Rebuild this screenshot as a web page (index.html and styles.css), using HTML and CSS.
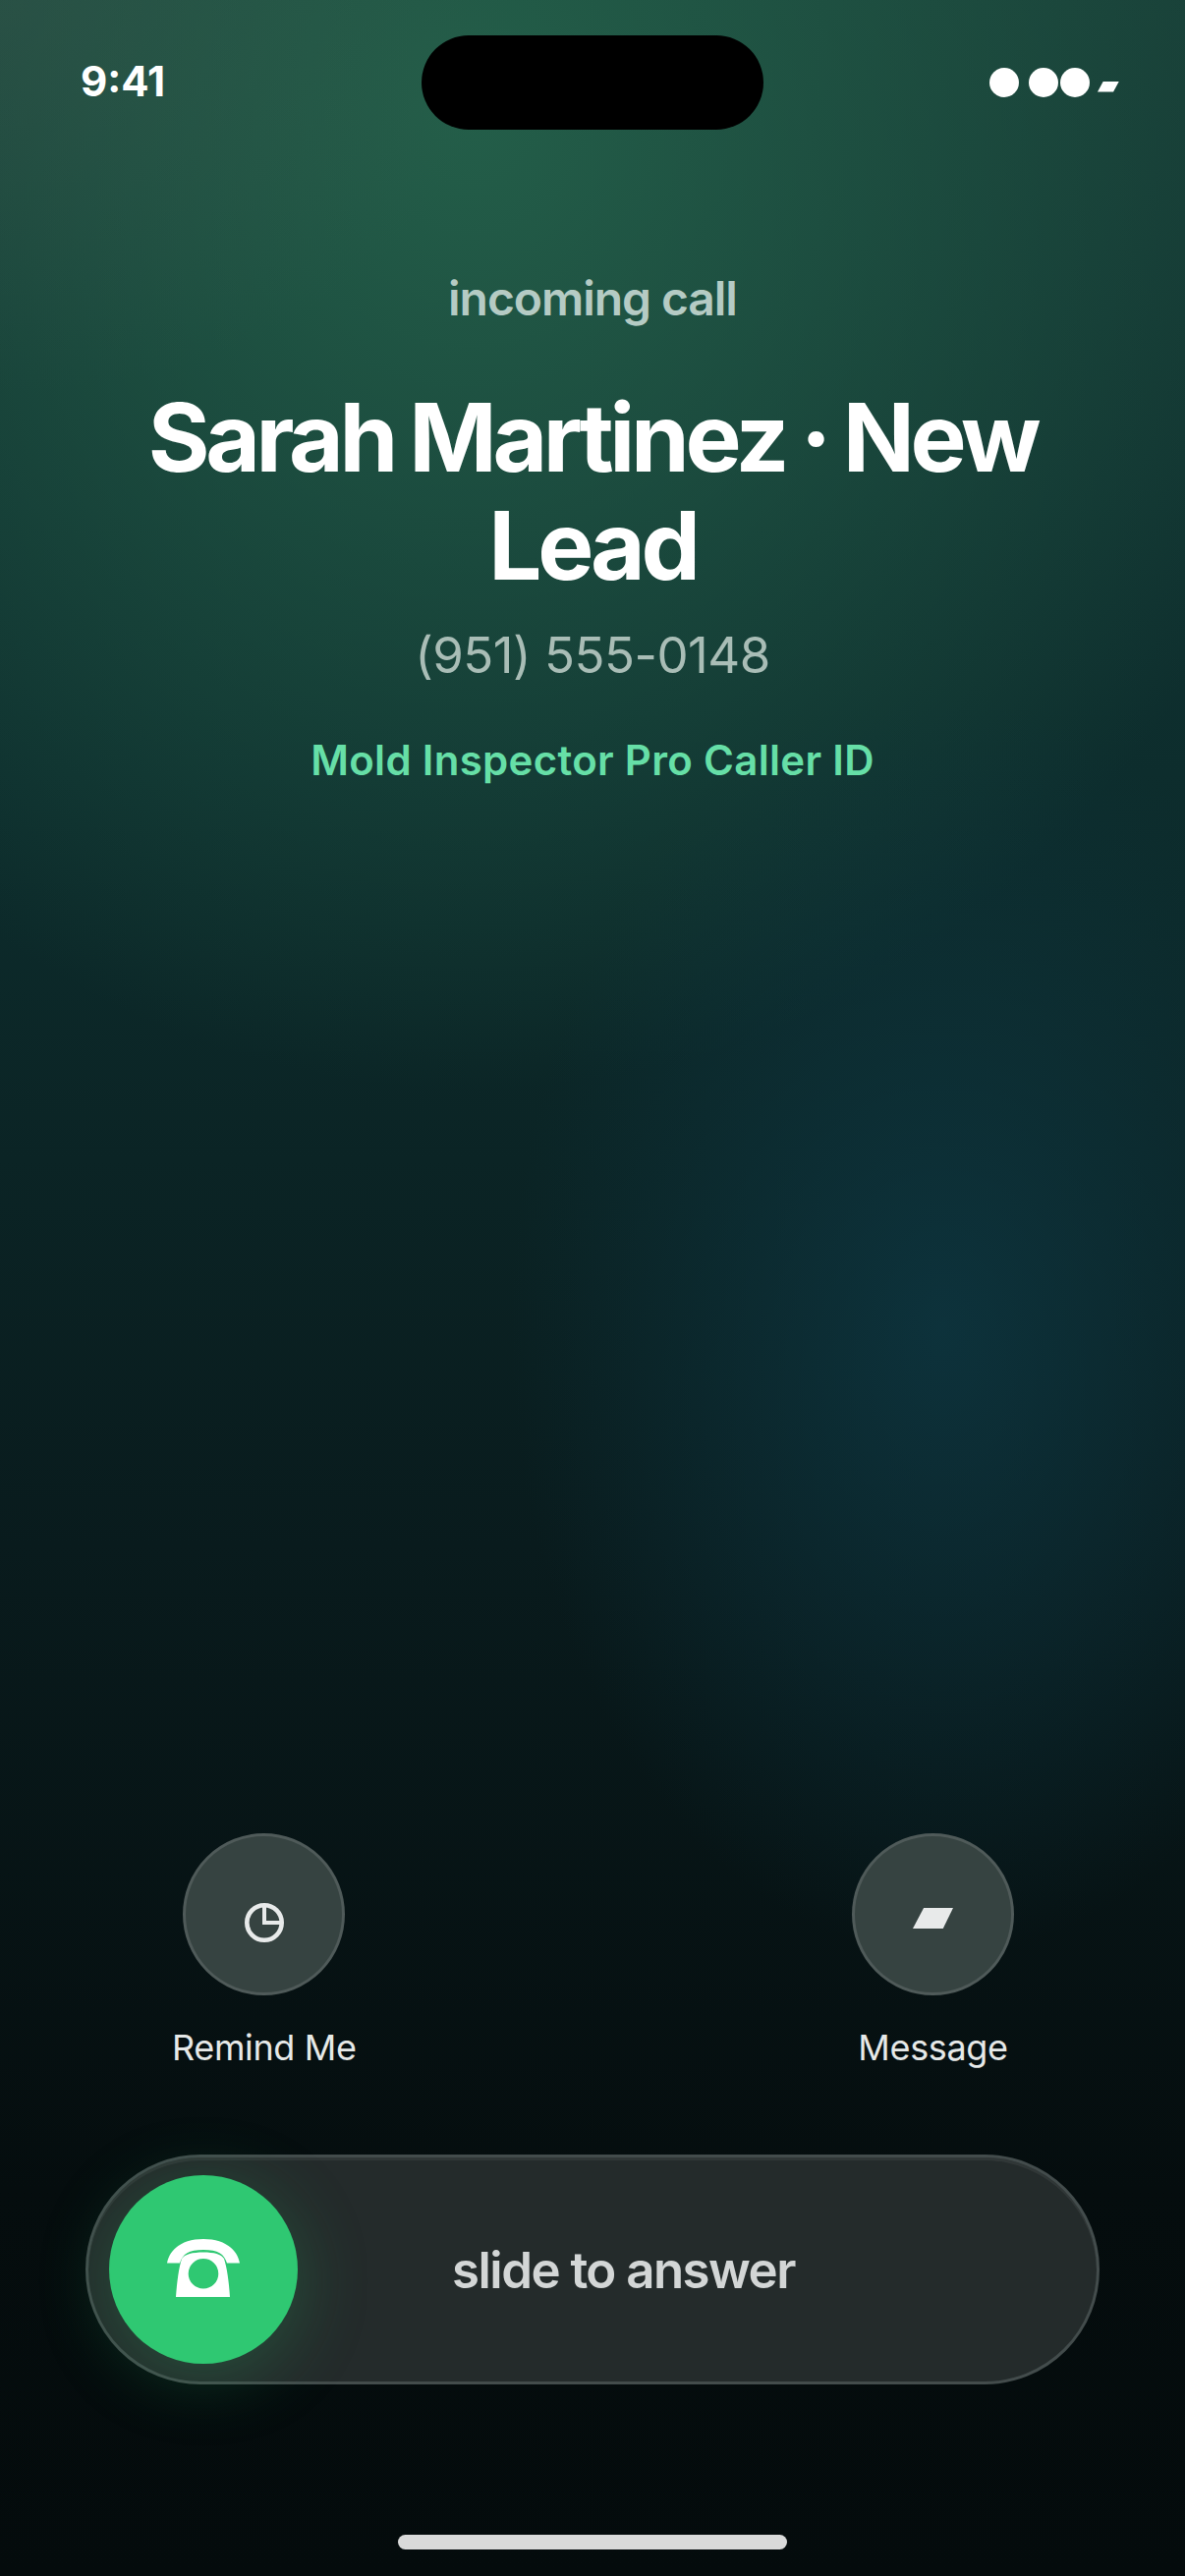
FILE: index.html
```html
<!DOCTYPE html>
<html lang="en">
<head>
    <meta charset="UTF-8">
    <meta name="viewport" content="width=device-width, initial-scale=1.0">
    <title>Incoming Call</title>
    <link rel="stylesheet" href="styles.css">
</head>
<body>
    <div class="screen">
        <div class="island"></div>

        <div class="status-bar">
            <span class="time">9:41</span>
            <div class="status-icons">
                <span class="dot"></span>
                <span class="dot dot-wide"></span>
                <span class="dot dot-tight"></span>
                <span class="battery"></span>
            </div>
        </div>

        <div class="caller">
            <div class="call-label">incoming call</div>
            <h1 class="caller-name">Sarah Martinez · New Lead</h1>
            <div class="caller-phone">(951) 555-0148</div>
            <div class="caller-id">Mold Inspector Pro Caller ID</div>
        </div>

        <div class="actions">
            <div class="action">
                <div class="action-circle">
                    <svg class="clock-icon" viewBox="0 0 40 40" width="40" height="40">
                        <circle cx="20" cy="20" r="17.7" fill="none" stroke="#e8eaea" stroke-width="4.6"/>
                        <path d="M20 2v18h18" fill="none" stroke="#e8eaea" stroke-width="4"/>
                    </svg>
                </div>
                <span class="action-label">Remind Me</span>
            </div>
            <div class="action">
                <div class="action-circle">
                    <span class="message-icon"></span>
                </div>
                <span class="action-label">Message</span>
            </div>
        </div>

        <div class="slider">
            <div class="knob">
                <svg viewBox="0 0 74 59" width="74" height="59">
                    <path fill="#fff" d="M0 24.5C3 9 17 0 37 0s34 9 37 24.5H61C58 15 52 11 37 11S16 15 13 24.5z"/>
                    <path fill="#fff" fill-rule="evenodd" d="M37 13.5c11 0 18 2 21 6.500 3 9 5 24 6 39H9c1-15 3-30 6-39 3-4.500 11-6.500 22-6.500zM37 20a15.300 15.300 0 1 0 0 30.600A15.300 15.300 0 0 0 37 20z"/>
                </svg>
            </div>
            <span class="slider-text">slide to answer</span>
        </div>

        <div class="home-indicator"></div>
    </div>
</body>
</html>
```

FILE: styles.css
```css
* {
    box-sizing: border-box;
}
body {
    margin: 0;
    background-color: #040b0c;
    font-family: Inter, "Noto Sans", sans-serif;
    color: #fff;
}
.screen {
    position: relative;
    width: 1206px;
    height: 2622px;
    display: flex;
    flex-direction: column;
    overflow: hidden;
    background:
        radial-gradient(ellipse 440px 640px at 960px 1350px, rgba(14, 56, 68, 0.75), rgba(14, 56, 68, 0) 100%),
        radial-gradient(ellipse 520px 400px at 0 0, rgba(70, 92, 84, 0.3), rgba(70, 92, 84, 0) 100%),
        radial-gradient(ellipse 900px 1000px at 480px 110px, rgba(36, 96, 74, 0.95), rgba(30, 90, 70, 0) 100%),
        linear-gradient(180deg, #173c36 0%, #0d2d2d 30%, #091b1d 60%, #050d0e 85%, #040b0c 100%);
}
.island {
    position: absolute;
    top: 36px;
    left: 429px;
    width: 348px;
    height: 96px;
    border-radius: 48px;
    background-color: #000;
}
.status-bar {
    display: flex;
    justify-content: space-between;
    align-items: center;
    height: 96px;
    margin-top: 36px;
    padding: 0 67px 0 82px;
}
.time {
    margin-top: -3px;
    font-size: 42px;
    font-weight: 700;
}
.status-icons {
    display: flex;
    align-items: center;
}
.dot {
    width: 30px;
    height: 30px;
    border-radius: 50%;
    background-color: #fff;
}
.dot-wide {
    margin-left: 10px;
}
.dot-tight {
    margin-left: 2px;
}
.battery {
    width: 22px;
    height: 11px;
    margin-left: 8px;
    margin-top: 8px;
    background-color: #fff;
    clip-path: polygon(27% 0, 100% 0, 73% 100%, 0 100%);
}
.caller {
    display: flex;
    flex-direction: column;
    align-items: center;
    padding: 142px 72px 0;
    text-align: center;
}
.call-label {
    font-size: 48px;
    font-weight: 600;
    letter-spacing: -0.022em;
    color: #b5cbc4;
}
.caller-name {
    margin: 57px 0 0;
    font-size: 96px;
    line-height: 110px;
    font-weight: 700;
    letter-spacing: -0.045em;
    word-spacing: -3px;
}
.caller-phone {
    margin-top: 26px;
    font-size: 51px;
    letter-spacing: -0.01em;
    color: #a9bdb6;
}
.caller-id {
    margin-top: 51px;
    font-size: 42px;
    font-weight: 600;
    letter-spacing: 0.007em;
    color: #66dfa7;
}
.actions {
    display: flex;
    justify-content: space-between;
    margin-top: auto;
    padding: 0 174px 0 175px;
}
.action {
    display: flex;
    flex-direction: column;
    align-items: center;
    gap: 31px;
}
.action-circle {
    display: flex;
    justify-content: center;
    align-items: center;
    width: 165px;
    height: 165px;
    border: 3px solid #4f5a59;
    border-radius: 50%;
    background-color: #364341;
}
.clock-icon {
    margin-top: 16px;
}
.message-icon {
    width: 41px;
    height: 21px;
    margin-top: 8px;
    background-color: #e8eaea;
    clip-path: polygon(27% 0, 100% 0, 75% 100%, 0 100%);
}
.action-label {
    font-size: 36px;
    letter-spacing: -0.01em;
    color: #e6e9e8;
}
.slider {
    position: relative;
    display: flex;
    justify-content: center;
    align-items: center;
    height: 234px;
    margin: 87px 87px 0;
    padding-left: 63px;
    border: 3px solid #434c4c;
    border-radius: 117px;
    background-color: #242b2b;
    box-shadow: inset 0 3px 0 rgba(255, 255, 255, 0.06);
}
.knob {
    position: absolute;
    top: 18px;
    left: 21px;
    display: flex;
    justify-content: center;
    align-items: center;
    width: 192px;
    height: 192px;
    border-radius: 50%;
    background-color: #2fc872;
    box-shadow: 0 12px 72px rgba(47, 200, 114, 0.25);
}
.knob svg {
    margin-top: -4px;
}
.slider-text {
    font-size: 51px;
    font-weight: 600;
    letter-spacing: -0.03em;
    color: #d3d6d6;
}
.home-indicator {
    width: 396px;
    height: 15px;
    margin: 153px auto 27px;
    border-radius: 9px;
    background-color: #d9dada;
}
```
